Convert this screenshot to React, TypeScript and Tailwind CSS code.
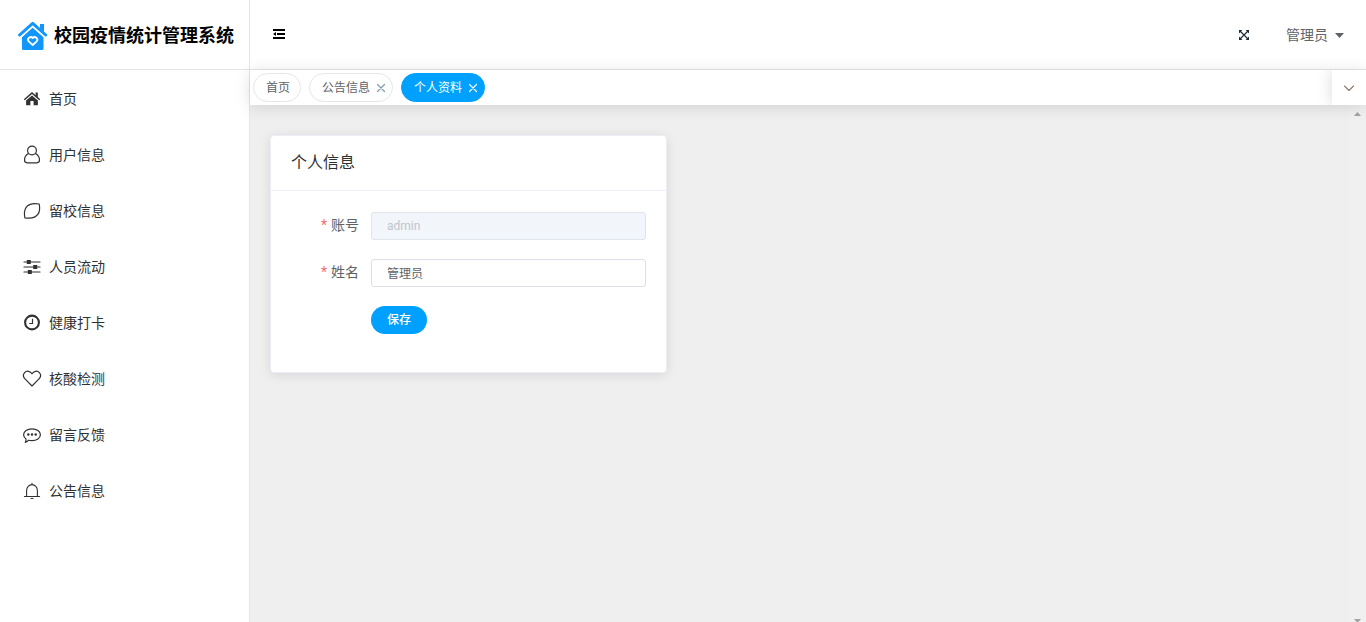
import React, { useState } from 'react';

type IconProps = { className?: string };

const stroke = {
  fill: 'none',
  stroke: 'currentColor',
  strokeLinecap: 'round' as const,
  strokeLinejoin: 'round' as const,
};

function LogoIcon({ className }: IconProps) {
  return (
    <svg viewBox="0 0 30 30" className={className} aria-hidden="true">
      <path d="M22 3h4v8l-4-3.6z" fill="#1296fb" />
      <path d="M4 16 14.5 6.5 25.5 16v11.5a1.5 1.5 0 0 1-1.5 1.5H5.5A1.5 1.5 0 0 1 4 27.5z" fill="#1296fb" />
      <path d="M2.5 16.3 14.7 5.3 27 16.3" {...stroke} stroke="#fff" strokeWidth="1.6" />
      <path d="M1.6 14 14.7 2.4l13 11.6" {...stroke} stroke="#1296fb" strokeWidth="3" />
      <path
        d="M14.7 24l-4-3.6a2.5 2.5 0 0 1 4-3.3 2.5 2.5 0 0 1 4 3.3z"
        {...stroke}
        stroke="#fff"
        strokeWidth="1.8"
      />
    </svg>
  );
}

function HomeIcon({ className }: IconProps) {
  return (
    <svg viewBox="0 0 20 20" className={className} fill="currentColor" aria-hidden="true">
      <path d="M10 3 1.8 10.2l1 1.1L10 5.1l7.2 6.2 1-1.1-2.4-2.1V3.4h-2.2v2.8z" />
      <path d="M10 6.4 4.1 11.4V16.2h4.3v-4.2h3.2v4.2h4.3v-4.8z" />
    </svg>
  );
}

function UserIcon({ className }: IconProps) {
  return (
    <svg viewBox="0 0 20 20" className={className} {...stroke} strokeWidth="1.2" aria-hidden="true">
      <circle cx="10" cy="5.5" r="4.4" />
      <path d="M6.4 8.5C3.6 10.1 2.5 12.3 2.5 15.1c0 2 .9 2.7 2.6 2.7h9.8c1.7 0 2.6-.7 2.6-2.7 0-2.8-1.1-5-3.9-6.6" />
    </svg>
  );
}

function LeafIcon({ className }: IconProps) {
  return (
    <svg viewBox="0 0 20 20" className={className} {...stroke} strokeWidth="1.2" aria-hidden="true">
      <path d="M17.2 3C18 7 17.9 10.400 16 13.200 13.700 16.700 8.900 17.700 2.900 16.800 2.100 12.400 2.200 9.200 4 6.600 6.300 3.200 11.200 2.100 17.200 3z" />
    </svg>
  );
}

function SlidersIcon({ className }: IconProps) {
  return (
    <svg viewBox="0 0 20 20" className={className} aria-hidden="true">
      <path d="M2 5h16M2 10h16M2 15h16" {...stroke} strokeWidth="1.2" />
      <path d="M4.8 3h4v4h-4zM11.2 8h4v4h-4zM5.8 13h4v4h-4z" fill="currentColor" />
    </svg>
  );
}

function ClockIcon({ className }: IconProps) {
  return (
    <svg viewBox="0 0 20 20" className={className} fill="none" stroke="currentColor" aria-hidden="true">
      <circle cx="10" cy="9.5" r="6.9" strokeWidth="2.1" />
      <path d="M10.5 5.8v4.7H7.2" strokeWidth="1.2" />
    </svg>
  );
}

function HeartIcon({ className }: IconProps) {
  return (
    <svg viewBox="0 0 20 20" className={className} {...stroke} strokeWidth="1.2" aria-hidden="true">
      <path d="M10 17 3 9.9C1.2 8 1.1 5.3 2.6 3.6c2-2.2 5.8-1.7 7.4 1.2 1.6-2.9 5.4-3.4 7.4-1.2 1.5 1.7 1.4 4.4-.4 6.3z" />
    </svg>
  );
}

function ChatIcon({ className }: IconProps) {
  return (
    <svg viewBox="0 0 20 20" className={className} aria-hidden="true">
      <path
        d="M10 3.8c4.7 0 8.4 2.5 8.4 5.9s-3.7 5.9-8.4 5.9c-1.2 0-2.2-.1-3.2-.4-1.1 1.2-2.2 1.9-3.5 2.2.7-1.1.9-2.1.7-3.4-1.5-1.1-2.4-2.6-2.4-4.3 0-3.4 3.7-5.9 8.4-5.9z"
        {...stroke}
        strokeWidth="1.2"
      />
      <g fill="currentColor">
        <circle cx="6.3" cy="9.5" r="1.2" />
        <circle cx="10" cy="9.5" r="1.2" />
        <circle cx="13.7" cy="9.5" r="1.2" />
      </g>
    </svg>
  );
}

function BellIcon({ className }: IconProps) {
  return (
    <svg viewBox="0 0 20 20" className={className} {...stroke} strokeWidth="1.1" aria-hidden="true">
      <path d="M4.6 15.5V9.5a5.4 5.9 0 0 1 10.8 0v6M2.4 15.5h15.2M9 17.5h2M10 2.2v1.2" />
    </svg>
  );
}

function FoldIcon({ className }: IconProps) {
  return (
    <svg viewBox="0 0 14 14" className={className} fill="currentColor" aria-hidden="true">
      <path d="M1 1h12v2H1zM5 5h8v2H5zM1 9h12v2H1zM1 6l3-2v4z" />
    </svg>
  );
}

function ExpandIcon({ className }: IconProps) {
  return (
    <svg viewBox="0 0 12 12" className={className} aria-hidden="true">
      <path d="M2 2l8 8M10 2l-8 8" stroke="currentColor" strokeWidth="1.1" />
      <path d="M1 1h3.4L1 4.4zM11 1v3.4L7.6 1zM1 11V7.6L4.4 11zM11 11H7.6L11 7.6z" fill="currentColor" />
    </svg>
  );
}

function CloseIcon({ className }: IconProps) {
  return (
    <svg viewBox="0 0 12 12" className={className} {...stroke} strokeWidth="1.2" aria-hidden="true">
      <path d="M2.5 2.5l7 7M9.5 2.5l-7 7" />
    </svg>
  );
}

const menus = [
  { name: '首页', icon: HomeIcon },
  { name: '用户信息', icon: UserIcon },
  { name: '留校信息', icon: LeafIcon },
  { name: '人员流动', icon: SlidersIcon },
  { name: '健康打卡', icon: ClockIcon },
  { name: '核酸检测', icon: HeartIcon },
  { name: '留言反馈', icon: ChatIcon },
  { name: '公告信息', icon: BellIcon },
];

function Sidebar() {
  return (
    <aside className="flex w-[250px] shrink-0 flex-col border-r border-[#e6e6e6] bg-white">
      <div className="flex h-[70px] shrink-0 items-center border-b border-[#e6e6e6] pt-0.5 pl-[18px]">
        <LogoIcon className="size-[30px] shrink-0" />
        <h1 className="ml-1.5 whitespace-nowrap text-lg font-bold text-black">校园疫情统计管理系统</h1>
      </div>
      <nav className="pt-px">
        {menus.map(({ name, icon: Icon }) => (
          <a key={name} href="#" className="flex h-14 items-center gap-[7px] pl-[22px] text-sm text-[#303133]">
            <Icon className="size-5" />
            {name}
          </a>
        ))}
      </nav>
    </aside>
  );
}

function Header() {
  return (
    <header className="flex h-[70px] shrink-0 items-center justify-between border-b border-[#e6e6e6] bg-white px-[22px]">
      <button type="button" aria-label="折叠菜单" className="text-black">
        <FoldIcon className="size-3.5" />
      </button>
      <div className="flex items-center">
        <button type="button" aria-label="全屏" className="mr-9 text-[#1b2a33]">
          <ExpandIcon className="size-3" />
        </button>
        <button type="button" className="flex items-center gap-[7px] text-sm text-[#606266]">
          管理员
          <svg viewBox="0 0 9 6" className="h-1.5 w-[9px]" fill="currentColor" aria-hidden="true">
            <path d="M0 1h9L4.5 6z" />
          </svg>
        </button>
      </div>
    </header>
  );
}

const tabs = [
  { name: '首页', closable: false },
  { name: '公告信息', closable: true },
  { name: '个人资料', closable: true },
];

function TabBar() {
  const [active, setActive] = useState('个人资料');

  return (
    <div className="z-10 flex h-[35px] shrink-0 justify-between bg-white shadow-[0_2px_16px_rgba(0,0,0,0.13)]">
      <div className="flex items-center gap-2 pl-[3px]">
        {tabs.map((tab) => (
          <div
            key={tab.name}
            className={`flex h-[29px] items-center rounded-full border text-xs ${
              tab.closable ? 'pr-[5px] pl-3' : 'pr-2.5 pl-3'
            } ${
              active === tab.name
                ? 'border-[#00a0ff] bg-[#00a0ff] text-white'
                : 'border-[#e6e6e6] bg-white text-[#606266]'
            }`}
          >
            <button type="button" onClick={() => setActive(tab.name)}>
              {tab.name}
            </button>
            {tab.closable && (
              <button
                type="button"
                aria-label={`关闭${tab.name}`}
                className={active === tab.name ? 'ml-[5px] text-white' : 'ml-[5px] text-[#7d9cb3]'}
              >
                <CloseIcon className="size-3" />
              </button>
            )}
          </div>
        ))}
      </div>
      <button
        type="button"
        aria-label="更多标签"
        className="flex w-[34px] items-center justify-center text-[#8c7b72] shadow-[0_0_16px_rgba(0,0,0,0.15)] [clip-path:inset(0_0_0_-30px)]"
      >
        <svg viewBox="0 0 12 12" className="size-3" {...stroke} strokeWidth="1.1" aria-hidden="true">
          <path d="M1.5 4 6 8.5 10.5 4" />
        </svg>
      </button>
    </div>
  );
}

function ProfileCard() {
  const [name, setName] = useState('管理员');
  const label = 'w-20 shrink-0 pr-3 text-right text-sm leading-[26px] text-[#606266]';
  const input = 'h-7 min-w-0 flex-1 rounded-[3px] border px-[15px] text-xs outline-none';

  return (
    <section className="w-3/8 rounded border border-[#ebeef5] bg-white shadow-[0_2px_12px_rgba(0,0,0,0.1)]">
      <h2 className="border-b border-[#ebeef5] px-5 py-[15px] text-base text-[#303133]">个人信息</h2>
      <form className="flex flex-col gap-[19px] px-5 pt-[21px] pb-[38px]" onSubmit={(e) => e.preventDefault()}>
        <div className="flex">
          <label htmlFor="username" className={label}>
            <span className="mr-1 text-[#f56c6c]">*</span>账号
          </label>
          <input
            id="username"
            disabled
            value="admin"
            className={`${input} border-[#dfe4ed] bg-[#f2f6fa] text-[#c0c4cc]`}
          />
        </div>
        <div className="flex">
          <label htmlFor="nickname" className={label}>
            <span className="mr-1 text-[#f56c6c]">*</span>姓名
          </label>
          <input
            id="nickname"
            value={name}
            onChange={(e) => setName(e.target.value)}
            className={`${input} border-[#dcdfe6] bg-white pb-0.5 text-[#606266]`}
          />
        </div>
        <button type="submit" className="ml-20 h-7 w-14 rounded-full bg-[#00a0ff] text-xs font-medium text-white">
          保存
        </button>
      </form>
    </section>
  );
}

function ScrollTrack() {
  return (
    <div className="flex w-[17px] shrink-0 flex-col items-center justify-between bg-[#f0f0f0] pt-[7px] text-[#a3a3a3]" aria-hidden="true">
      <svg viewBox="0 0 7 4" className="h-1 w-[7px]" fill="currentColor">
        <path d="M0 4 3.5 0 7 4z" />
      </svg>
      <svg viewBox="0 0 7 4" className="h-1 w-[7px]" fill="currentColor">
        <path d="M0 1h7L3.5 5z" />
      </svg>
    </div>
  );
}

export default function App() {
  return (
    <div className="flex h-screen overflow-hidden bg-[#efefef] font-['Roboto','Noto_Sans_CJK_SC',sans-serif]">
      <Sidebar />
      <div className="flex min-w-0 flex-1 flex-col">
        <Header />
        <TabBar />
        <div className="flex min-h-0 flex-1">
          <main className="min-w-0 flex-1 px-5 pt-[30px]">
            <ProfileCard />
          </main>
          <ScrollTrack />
        </div>
      </div>
    </div>
  );
}
